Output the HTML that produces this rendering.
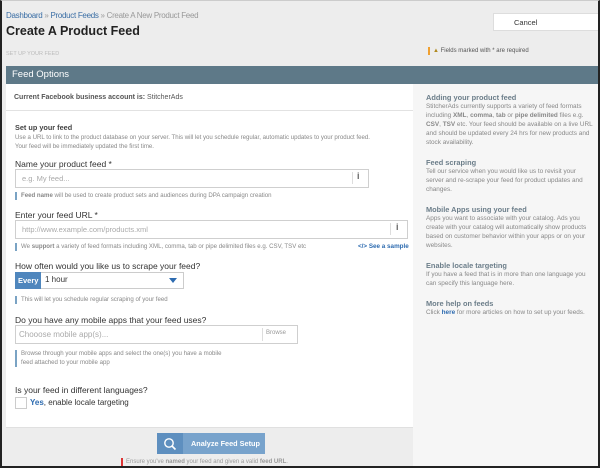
<!DOCTYPE html>
<html><head><meta charset="utf-8"><style>
*{box-sizing:border-box;margin:0;padding:0}
body{width:600px;height:468px;overflow:hidden;background:#ededed;font-family:"Liberation Sans",sans-serif;position:relative;color:#333}
.a{position:absolute;white-space:nowrap}
.frame{position:absolute;left:0;top:0;width:600px;height:468px;border:2px solid #222;border-top:1px solid #ccc;z-index:10;pointer-events:none}
.lbl{font-size:8.5px;color:#333}
.hint{font-size:6.1px;color:#888;border-left:2px solid #7aa3c4;padding-left:4px;line-height:8px}
.inp{position:absolute;background:#fff;border:1px solid #cfcfcf;font-size:7.5px;color:#aaa;padding-left:6px;line-height:17px}
.sh{font-size:7.4px;font-weight:bold;color:#6c7e8a}
.st{font-size:6.4px;color:#888;line-height:9px;white-space:normal;width:168px}
</style></head><body>
<div class="frame"></div>
<div class="a" style="left:6px;top:11px;font-size:8px;color:#3a6ea5;letter-spacing:-0.3px">Dashboard <span style="color:#999">»</span> Product Feeds <span style="color:#999">» Create A New Product Feed</span></div>
<div class="a" style="left:6px;top:24px;font-size:12.5px;font-weight:bold;color:#222">Create A Product Feed</div>
<div class="a" style="left:493px;top:13px;width:107px;height:18px;background:#fff;border:1px solid #ddd;font-size:7.5px;padding:4px 0 0 20px;overflow:hidden">Cancel</div>
<div class="a" style="left:6px;top:51px;font-size:5.5px;color:#bbb">SET UP YOUR FEED</div>
<div class="a" style="left:428px;top:47px;width:2px;height:8px;background:#f0a030"></div>
<div class="a" style="left:433px;top:48px;font-size:6px;color:#555"><span style="color:#b08a20">▲</span> Fields marked with * are required</div>
<div class="a" style="left:6px;top:66px;width:594px;height:18px;background:#5e7988;color:#fff;font-size:9.5px;padding:3px 0 0 6px">Feed Options</div>
<div class="a" style="left:6px;top:84px;width:407px;height:344px;background:#fff"></div>
<div class="a" style="left:413px;top:84px;width:187px;height:384px;background:#f6f6f6"></div>
<div class="a" style="left:6px;top:110px;width:407px;height:1px;background:#e2e2e2"></div>
<div class="a" style="left:14px;top:94px;font-size:7px;color:#555"><b>Current Facebook business account is:</b> StitcherAds</div>
<div class="a" style="left:15px;top:123px;font-size:7.3px;font-weight:bold;color:#444">Set up your feed</div>
<div class="a" style="left:15px;top:133px;font-size:6.1px;color:#888;line-height:9px">Use a URL to link to the product database on your server. This will let you schedule regular, automatic updates to your product feed.<br>Your feed will be immediately updated the first time.</div>
<div class="a lbl" style="left:15px;top:159px">Name your product feed *</div>
<div class="inp" style="left:15px;top:169px;width:354px;height:19px">e.g. My feed...</div>
<div class="a" style="left:352px;top:172px;width:1px;height:12px;background:#ddd"></div>
<div class="a" style="left:357px;top:171px;font-size:9px;color:#666;font-weight:bold">i</div>
<div class="a hint" style="left:15px;top:192px"><b>Feed name</b> will be used to create product sets and audiences during DPA campaign creation</div>
<div class="a lbl" style="left:15px;top:210px">Enter your feed URL *</div>
<div class="inp" style="left:15px;top:220px;width:393px;height:19px">http://www.example.com/products.xml</div>
<div class="a" style="left:390px;top:223px;width:1px;height:12px;background:#ddd"></div>
<div class="a" style="left:396px;top:222px;font-size:9px;color:#666;font-weight:bold">i</div>
<div class="a hint" style="left:15px;top:243px">We <b>support</b> a variety of feed formats including XML, comma, tab or pipe delimited files e.g. CSV, TSV etc</div>
<div class="a" style="left:358px;top:243px;font-size:6.3px;color:#2d6bb0;font-weight:bold">&lt;/&gt; See a sample</div>
<div class="a lbl" style="left:15px;top:261px">How often would you like us to scrape your feed?</div>
<div class="a" style="left:15px;top:272px;width:169px;height:17px;background:#fff;border:1px solid #ccc"></div>
<div class="a" style="left:15px;top:272px;width:26px;height:17px;background:#4f86bd;color:#fff;font-size:7.5px;padding:4px 0 0 3px;font-weight:bold">Every</div>
<div class="a" style="left:45px;top:275px;font-size:8px;color:#333">1 hour</div>
<div class="a" style="left:169px;top:278px;width:0;height:0;border-left:4px solid transparent;border-right:4px solid transparent;border-top:5px solid #2d6bb0"></div>
<div class="a hint" style="left:15px;top:296px">This will let you schedule regular scraping of your feed</div>
<div class="a lbl" style="left:15px;top:315px">Do you have any mobile apps that your feed uses?</div>
<div class="inp" style="left:15px;top:325px;width:283px;height:19px;font-size:8px;padding-left:3px">Chooose mobile app(s)...</div>
<div class="a" style="left:262px;top:328px;width:1px;height:13px;background:#ddd"></div>
<div class="a" style="left:266px;top:330px;font-size:6px;color:#999">Browse</div>
<div class="a hint" style="left:15px;top:350px;line-height:8.5px">Browse through your mobile apps and select the one(s) you have a mobile<br>feed attached to your mobile app</div>
<div class="a lbl" style="left:15px;top:385px">Is your feed in different languages?</div>
<div class="a" style="left:15px;top:397px;width:12px;height:12px;border:1px solid #ccc;background:#fff"></div>
<div class="a" style="left:30px;top:398px;font-size:8px;color:#333"><b style="color:#2d6bb0">Yes</b>, enable locale targeting</div>
<div class="a" style="left:6px;top:427px;width:407px;height:1px;background:#e0e0e0"></div>
<div class="a" style="left:157px;top:433px;width:108px;height:21px;background:#78a3cc;color:#fff;font-size:7.3px;font-weight:bold;padding:6px 0 0 34px">Analyze Feed Setup</div>
<div class="a" style="left:157px;top:433px;width:26px;height:21px;background:#5e8fbf"></div>
<svg class="a" style="left:163px;top:437px" width="14" height="14" viewBox="0 0 14 14"><circle cx="6" cy="6" r="4.2" fill="none" stroke="#fff" stroke-width="1.4"/><path d="M9 9 L12.5 12.5" stroke="#fff" stroke-width="1.6"/></svg>
<div class="a" style="left:121px;top:458px;width:2px;height:8px;background:#d33"></div>
<div class="a" style="left:126px;top:459px;font-size:6px;color:#999">Ensure you've <b>named</b> your feed and given a valid <b>feed URL</b>.</div>
<div class="a" style="left:426px;top:93px">
<div class="sh">Adding your product feed</div>
<div class="st">StitcherAds currently supports a variety of feed formats including <b>XML</b>, <b>comma</b>, <b>tab</b> or <b>pipe delimited</b> files e.g. <b>CSV</b>, <b>TSV</b> etc. Your feed should be available on a live URL and should be updated every 24 hrs for new products and stock availability.</div>
<div class="sh" style="margin-top:11px">Feed scraping</div>
<div class="st">Tell our service when you would like us to revisit your server and re-scrape your feed for product updates and changes.</div>
<div class="sh" style="margin-top:11px">Mobile Apps using your feed</div>
<div class="st">Apps you want to associate with your catalog. Ads you create with your catalog will automatically show products based on customer behavior within your apps or on your websites.</div>
<div class="sh" style="margin-top:11px">Enable locale targeting</div>
<div class="st">If you have a feed that is in more than one language you can specify this language here.</div>
<div class="sh" style="margin-top:11px">More help on feeds</div>
<div class="st">Click <b style="color:#2d6bb0">here</b> for more articles on how to set up your feeds.</div>
</div>
</body></html>
